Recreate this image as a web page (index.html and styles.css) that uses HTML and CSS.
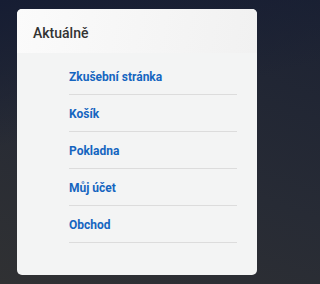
FILE: index.html
```html
<!DOCTYPE html>
<html lang="cs">
<head>
<meta charset="utf-8">
<link rel="stylesheet" href="styles.css">
</head>
<body>
<div class="backdrop">
  <section class="card">
    <header class="card-head">Aktuálně</header>
    <ul class="links">
      <li><a href="#">Zkušební stránka</a></li>
      <li><a href="#">Košík</a></li>
      <li><a href="#">Pokladna</a></li>
      <li><a href="#">Můj účet</a></li>
      <li><a href="#">Obchod</a></li>
    </ul>
  </section>
</div>
</body>
</html>
```

FILE: styles.css
```css
html {
  background: #2d2f33;
}
html, body {
  margin: 0;
  padding: 0;
}
body {
  min-height: 284px;
  font-family: Roboto, "Liberation Sans", sans-serif;
}
.backdrop {
  min-height: 284px;
  box-sizing: border-box;
  padding: 9px 10px 9px 17px;
  background:
    linear-gradient(165deg, #161d33 0%, rgba(22,29,51,0) 40%),
    linear-gradient(200deg, #1c2233 0%, #272b35 55%, #303133 100%);
}
.card {
  width: 240px;
  height: 266px;
  background: #f3f4f4;
  border-radius: 5px;
  overflow: hidden;
  display: flex;
  flex-direction: column;
}
.card-head {
  height: 44px;
  box-sizing: border-box;
  padding: 16px 16px 0 16px;
  font-size: 14px;
  line-height: 17px;
  font-weight: 500;
  color: #333;
  background: linear-gradient(100deg, #fbfbfb 0%, #f1f1f1 100%);
}
.links {
  list-style: none;
  margin: 0;
  padding: 5px 20px 0 52px;
}
.links li {
  padding: 12px 0 9px;
  border-bottom: 1px solid #dcdcdc;
  font-size: 12px;
  line-height: 15px;
}
.links a {
  color: #1565c0;
  font-weight: 700;
  text-decoration: none;
}
```
